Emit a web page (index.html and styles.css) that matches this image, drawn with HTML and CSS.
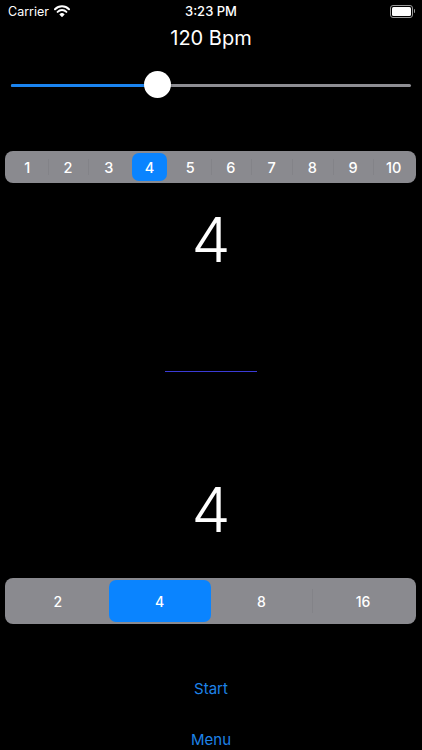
FILE: index.html
```html
<!DOCTYPE html>
<html lang="en">
<head>
  <meta charset="UTF-8">
  <meta name="viewport" content="width=device-width, initial-scale=1.0">
  <title>Metronome</title>
  <link rel="stylesheet" href="styles.css">
</head>
<body>
  <div class="status-bar">
    <div class="carrier">
      Carrier
      <svg class="wifi" width="16" height="12" viewBox="0 0 16 12">
        <path d="M1 4.2 A10 10 0 0 1 15 4.2" fill="none" stroke="#fff" stroke-width="2" stroke-linecap="round"/>
        <path d="M3.6 6.9 A6.3 6.3 0 0 1 12.4 6.9" fill="none" stroke="#fff" stroke-width="2" stroke-linecap="round"/>
        <path d="M6.1 9.4 A2.8 2.8 0 0 1 9.9 9.4 L8 11.3 Z" fill="#fff" stroke="#fff" stroke-width="1.2" stroke-linejoin="round"/>
      </svg>
    </div>
    <div class="clock">3:23 PM</div>
    <div class="battery"><span class="battery-level"></span></div>
  </div>

  <div class="tempo">120 Bpm</div>

  <div class="slider">
    <div class="track">
      <div class="track-fill"></div>
      <div class="thumb"></div>
    </div>
  </div>

  <div class="segments beats">
    <div class="seg">1</div>
    <div class="seg">2</div>
    <div class="seg">3</div>
    <div class="seg selected">4</div>
    <div class="seg">5</div>
    <div class="seg">6</div>
    <div class="seg">7</div>
    <div class="seg">8</div>
    <div class="seg">9</div>
    <div class="seg">10</div>
  </div>

  <div class="count">4</div>
  <div class="divider"></div>
  <div class="count count-low">4</div>

  <div class="segments notes">
    <div class="seg">2</div>
    <div class="seg selected">4</div>
    <div class="seg">8</div>
    <div class="seg">16</div>
  </div>

  <div class="link start">Start</div>
  <div class="link menu">Menu</div>
</body>
</html>
```

FILE: styles.css
```css
html, body {
  margin: 0;
  padding: 0;
  background: #000;
}
body {
  width: 422px;
  height: 750px;
  overflow: hidden;
  font-family: Inter, "Liberation Sans", sans-serif;
  color: #fff;
}
.status-bar {
  height: 22px;
  display: flex;
  align-items: center;
  justify-content: space-between;
  padding: 0 8px;
  position: relative;
}
.carrier {
  font-size: 12.5px;
  display: flex;
  align-items: center;
  gap: 5px;
}
.clock {
  position: absolute;
  left: 0;
  right: 0;
  text-align: center;
  font-size: 13px;
  font-weight: 500;
}
.battery {
  width: 19px;
  height: 9px;
  border: 1px solid #9a9a9a;
  border-radius: 3px;
  padding: 1px;
  position: relative;
  margin-right: 1px;
}
.battery::after {
  content: "";
  position: absolute;
  right: -3px;
  top: 3px;
  width: 1.5px;
  height: 4px;
  background: #9a9a9a;
  border-radius: 0 1px 1px 0;
}
.battery-level {
  display: block;
  width: 100%;
  height: 100%;
  background: #fff;
  border-radius: 1.5px;
}
.tempo {
  height: 32px;
  line-height: 32px;
  text-align: center;
  font-size: 20px;
}
.slider {
  height: 62px;
  display: flex;
  align-items: center;
  padding: 0 11px;
}
.track {
  flex: 1;
  height: 3px;
  border-radius: 2px;
  background: #8e8e93;
  position: relative;
}
.track-fill {
  width: 146px;
  height: 100%;
  border-radius: 2px;
  background: #1a84f0;
}
.thumb {
  position: absolute;
  left: 133px;
  top: -12.5px;
  width: 27px;
  height: 27px;
  border-radius: 50%;
  background: #fff;
  box-shadow: 0 1px 3px rgba(0,0,0,0.3);
}
.segments {
  margin: 0 6px 0 5px;
  background: #8a8a8f;
  border-radius: 8px;
  display: flex;
  align-items: stretch;
  padding: 2px;
}
.seg {
  flex: 1;
  display: flex;
  align-items: center;
  justify-content: center;
  font-size: 14.5px;
  font-weight: 500;
  position: relative;
  border-radius: 7px;
}
.seg + .seg::before {
  content: "";
  position: absolute;
  left: 0;
  top: 22%;
  bottom: 22%;
  width: 1px;
  background: #838388;
}
.seg.selected::before,
.seg.selected + .seg::before {
  display: none;
}
.seg.selected {
  z-index: 0;
}
.seg.selected::after {
  content: "";
  position: absolute;
  top: 0;
  bottom: 0;
  left: 0;
  right: 0;
  z-index: -1;
  border-radius: 7px;
  background: #0a84ff;
}
.beats .seg.selected::after {
  left: 3px;
  right: 3px;
}
.beats {
  margin-top: 35px;
  height: 28px;
}
.notes {
  margin-top: 37px;
  height: 42px;
}
.notes .seg {
  font-size: 14px;
}
.count {
  margin-top: 26px;
  height: 62px;
  line-height: 62px;
  font-size: 62px;
  font-weight: 300;
  text-align: center;
}
.count-low {
  margin-top: 107px;
}
.divider {
  margin: 100px auto 0;
  width: 92px;
  height: 1px;
  background: #3b3bd6;
}
.link {
  height: 20px;
  line-height: 20px;
  text-align: center;
  font-size: 15px;
  color: #1e83e8;
}
.start {
  margin-top: 55px;
}
.menu {
  margin-top: 31px;
}
```
